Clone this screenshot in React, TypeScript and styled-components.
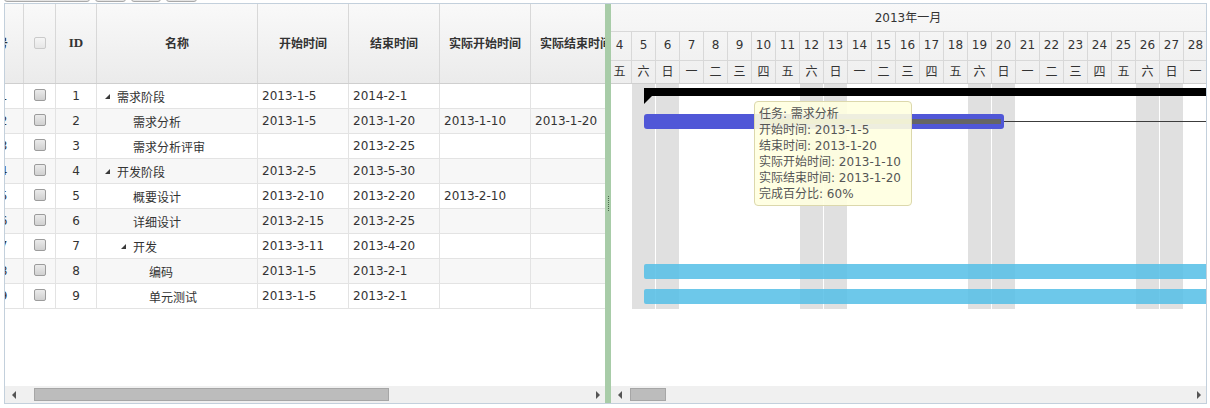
import React from 'react';
import styled, { createGlobalStyle } from 'styled-components';

const GlobalStyle = createGlobalStyle`
  html, body { margin: 0; padding: 0; background: #fff; }
  body {
    font-family: "DejaVu Sans", "Noto Sans CJK SC", sans-serif;
    font-size: 12px;
    color: #333;
  }
`;

type Task = {
  id: number;
  name: string;
  level: number;
  parent?: boolean;
  start: string;
  end: string;
  aStart?: string;
  aEnd?: string;
  kind: 'summary' | 'task' | 'light' | 'none';
  link?: boolean;
};

const tasks: Task[] = [
  { id: 1, name: '需求阶段', level: 0, parent: true, start: '2013-1-5', end: '2014-2-1', kind: 'summary' },
  { id: 2, name: '需求分析', level: 1, start: '2013-1-5', end: '2013-1-20', aStart: '2013-1-10', aEnd: '2013-1-20', kind: 'task', link: true },
  { id: 3, name: '需求分析评审', level: 1, start: '', end: '2013-2-25', kind: 'none' },
  { id: 4, name: '开发阶段', level: 0, parent: true, start: '2013-2-5', end: '2013-5-30', kind: 'summary' },
  { id: 5, name: '概要设计', level: 1, start: '2013-2-10', end: '2013-2-20', aStart: '2013-2-10', kind: 'task' },
  { id: 6, name: '详细设计', level: 1, start: '2013-2-15', end: '2013-2-25', kind: 'task' },
  { id: 7, name: '开发', level: 1, parent: true, start: '2013-3-11', end: '2013-4-20', kind: 'summary' },
  { id: 8, name: '编码', level: 2, start: '2013-1-5', end: '2013-2-1', kind: 'light' },
  { id: 9, name: '单元测试', level: 2, start: '2013-1-5', end: '2013-2-1', kind: 'light' },
];

const DAY_W = 24;
const FIRST_DAY = 4;
const BASE = Date.UTC(2013, 0, FIRST_DAY);
const dayIndex = (s: string) => {
  const [y, m, d] = s.split('-').map(Number);
  return Math.round((Date.UTC(y, m - 1, d) - BASE) / 86400000);
};
const xOf = (s: string) => dayIndex(s) * DAY_W + DAY_W / 2;

const days = Array.from({ length: 31 - FIRST_DAY + 1 }, (_, i) => i + FIRST_DAY);
const weekNames = ['日', '一', '二', '三', '四', '五', '六'];
const weekdayOf = (d: number) => (1 + d) % 7;

const Page = styled.div`
  width: 1210px;
  height: 408px;
  overflow: hidden;
  background: #fff;
`;

const Toolbar = styled.div`
  display: flex;
  align-items: flex-end;
  gap: 5px;
  height: 2px;
  margin-bottom: 1px;
  padding-left: 4px;
  overflow: hidden;
`;

const ToolButton = styled.div<{ $w: number }>`
  width: ${(p) => p.$w}px;
  height: 24px;
  flex: none;
  box-sizing: border-box;
  border: 1px solid #a9a9a9;
  border-radius: 3px;
  background: linear-gradient(#fdfdfd, #e4e4e4);
`;

const Panel = styled.div`
  margin-left: 4px;
  width: 1203px;
  height: 401px;
  box-sizing: border-box;
  border: 1px solid #c3d0dc;
  display: flex;
  background: #fff;
`;

const LeftPane = styled.div`
  width: 600px;
  flex: none;
  display: flex;
  flex-direction: column;
  overflow: hidden;
`;

const GridViewport = styled.div`
  flex: 1;
  overflow: hidden;
  display: flex;
  flex-direction: column;
`;

const GridInner = styled.div`
  width: 638px;
  margin-left: -21px;
  flex: 1;
  display: flex;
  flex-direction: column;
`;

const HeaderRow = styled.div`
  display: flex;
  height: 80px;
  flex: none;
  box-sizing: border-box;
  border-bottom: 1px solid #cfcfcf;
  background: linear-gradient(#f9f9f9, #ebebeb);
`;

const HeadCell = styled.div<{ $w: number; $right?: boolean }>`
  width: ${(p) => p.$w}px;
  flex: none;
  box-sizing: border-box;
  border-right: 1px solid #d8d8d8;
  display: flex;
  align-items: center;
  justify-content: ${(p) => (p.$right ? 'flex-end' : 'center')};
  padding-right: ${(p) => (p.$right ? 15 : 0)}px;
  padding-bottom: 2px;
  font-weight: bold;
  font-size: 12px;
  color: #333;
  white-space: nowrap;
  overflow: hidden;
`;

const HeadLatin = styled.span`
  font-family: "Liberation Serif", serif;
  font-size: 13px;
  font-weight: bold;
`;

const Row = styled.div<{ $alt: boolean }>`
  display: flex;
  height: 25px;
  flex: none;
  box-sizing: border-box;
  border-bottom: 1px solid #e3e3e3;
  background: ${(p) => (p.$alt ? '#f7f7f7' : '#fff')};
`;

const Cell = styled.div<{ $w: number; $center?: boolean }>`
  width: ${(p) => p.$w}px;
  flex: none;
  box-sizing: border-box;
  border-right: 1px solid #e3e3e3;
  display: flex;
  align-items: center;
  justify-content: ${(p) => (p.$center ? 'center' : 'flex-start')};
  padding-left: ${(p) => (p.$center ? 0 : 4)}px;
  white-space: nowrap;
  overflow: hidden;
  color: #333;
`;

const Check = styled.span<{ $disabled?: boolean }>`
  width: 12px;
  height: 12px;
  box-sizing: border-box;
  margin-bottom: ${(p) => (p.$disabled ? 0 : 2)}px;
  border: 1px solid ${(p) => (p.$disabled ? '#cacaca' : '#9c9c9c')};
  border-radius: 2px;
  background: ${(p) =>
    p.$disabled ? 'linear-gradient(#f5f5f5, #e6e6e6)' : 'linear-gradient(#ebebeb, #d0d0d0)'};
`;

const Indent = styled.span<{ $level: number }>`
  width: ${(p) => p.$level * 16}px;
  flex: none;
`;

const Expander = styled.span`
  width: 16px;
  flex: none;
  display: flex;
  align-items: center;
`;

const Triangle = styled.span`
  width: 0;
  height: 0;
  margin-left: 4px;
  margin-top: 1px;
  border-left: 5px solid transparent;
  border-bottom: 5px solid #3a3a3a;
`;

const Splitter = styled.div`
  width: 6px;
  flex: none;
  background: #a8cca8;
  display: flex;
  align-items: center;
  justify-content: center;
`;

const Grip = styled.div`
  width: 0;
  height: 15px;
  border-left: 1px dotted #4d6b4d;
`;

const GanttPane = styled.div`
  flex: 1;
  min-width: 0;
  display: flex;
  flex-direction: column;
  overflow: hidden;
`;

const GanttHeader = styled.div`
  height: 80px;
  flex: none;
  overflow: hidden;
  background: linear-gradient(#f8f8f8, #eeeeee);
`;

const Timeline = styled.div`
  width: ${days.length * DAY_W}px;
  margin-left: -3px;
  position: relative;
`;

const YearRow = styled.div`
  width: ${31 * DAY_W}px;
  margin-left: ${-(FIRST_DAY - 1) * DAY_W}px;
  height: 28px;
  box-sizing: border-box;
  border-bottom: 1px solid #d8d8d8;
  display: flex;
  align-items: center;
  justify-content: center;
  padding-bottom: 3px;
  color: #333;
`;

const DayRow = styled.div<{ $h: number; $last?: boolean }>`
  height: ${(p) => p.$h}px;
  box-sizing: border-box;
  border-bottom: 1px solid ${(p) => (p.$last ? '#cfcfcf' : '#d8d8d8')};
  display: flex;
`;

const DayCell = styled.div<{ $pb: number }>`
  width: ${DAY_W}px;
  flex: none;
  box-sizing: border-box;
  border-right: 1px solid #d8d8d8;
  display: flex;
  align-items: center;
  justify-content: center;
  padding-bottom: ${(p) => p.$pb}px;
  color: #333;
  white-space: nowrap;
`;

const GanttBody = styled.div`
  flex: 1;
  position: relative;
  overflow: hidden;
`;

const DayStrip = styled.div`
  display: flex;
  height: ${9 * 25}px;
`;

const DayColumn = styled.div<{ $weekend: boolean }>`
  width: ${DAY_W}px;
  flex: none;
  box-sizing: border-box;
  border-right: 1px solid #fff;
  background: ${(p) => (p.$weekend ? '#e0e0e0' : 'transparent')};
`;

const RowLayer = styled.div`
  position: absolute;
  top: 0;
  left: 0;
  width: 100%;
`;

const GanttRow = styled.div`
  position: relative;
  height: 25px;
`;

const SummaryBar = styled.div`
  position: absolute;
  top: 4px;
  height: 8px;
  background: #000;
`;

const SummaryCap = styled.div`
  position: absolute;
  top: 8px;
  left: 0;
  width: 0;
  height: 0;
  border-top: 8px solid #000;
  border-right: 8px solid transparent;
`;

const TaskBar = styled.div`
  position: absolute;
  top: 5px;
  height: 15px;
  border-radius: 3px;
  background: #5057d7;
`;

const ActualLine = styled.div`
  position: absolute;
  top: 10px;
  height: 5px;
  background: #656565;
`;

const LightBar = styled.div`
  position: absolute;
  top: 5px;
  height: 15px;
  border-radius: 2px;
  background: rgba(84, 190, 230, 0.85);
`;

const LinkLine = styled.div`
  position: absolute;
  top: 12px;
  height: 1px;
  width: 1200px;
  background: #3c3c3c;
`;

const Tooltip = styled.div`
  position: absolute;
  left: 143px;
  top: 17px;
  z-index: 5;
  padding: 4px 10px 3px 4px;
  border: 1px solid #dcd8ac;
  border-radius: 4px;
  background: rgba(255, 255, 224, 0.9);
  color: #555;
  font-size: 12px;
  line-height: 16px;
  white-space: nowrap;
`;

const ScrollTrack = styled.div`
  height: 17px;
  flex: none;
  display: flex;
  align-items: center;
  background: #f0f0f0;
`;

const ArrowBox = styled.div<{ $w: number }>`
  width: ${(p) => p.$w}px;
  height: 17px;
  flex: none;
  display: flex;
  align-items: center;
  justify-content: center;
`;

const Arrow = styled.span<{ $dir: 'left' | 'right' }>`
  width: 0;
  height: 0;
  border-top: 4px solid transparent;
  border-bottom: 4px solid transparent;
  ${(p) => (p.$dir === 'left' ? 'border-right: 4px solid #555;' : 'border-left: 4px solid #555;')}
`;

const Thumb = styled.div<{ $offset: number; $w: number }>`
  margin-left: ${(p) => p.$offset}px;
  width: ${(p) => p.$w}px;
  height: 13px;
  flex: none;
  box-sizing: border-box;
  background: #bcbcbc;
  border: 1px solid #a6a6a6;
`;

const Spacer = styled.div`
  flex: 1;
`;

const cols = [40, 32, 41, 161, 91, 91, 91, 91];

function ScrollBar(props: { leftW: number; offset: number; thumbW: number; rightW: number }) {
  return (
    <ScrollTrack>
      <ArrowBox $w={props.leftW}>
        <Arrow $dir="left" />
      </ArrowBox>
      <Thumb $offset={props.offset} $w={props.thumbW} />
      <Spacer />
      <ArrowBox $w={props.rightW}>
        <Arrow $dir="right" />
      </ArrowBox>
    </ScrollTrack>
  );
}

function GanttBar({ t }: { t: Task }) {
  if (t.kind === 'none' || !t.start) return null;
  const x1 = xOf(t.start);
  const x2 = xOf(t.end);
  if (t.kind === 'summary') {
    return (
      <SummaryBar style={{ left: x1, width: x2 - x1 }}>
        <SummaryCap />
      </SummaryBar>
    );
  }
  if (t.kind === 'light') {
    return <LightBar style={{ left: x1, width: x2 - x1 }} />;
  }
  return (
    <>
      <TaskBar style={{ left: x1, width: x2 - x1 }} />
      {t.aStart && t.aEnd && (
        <ActualLine style={{ left: xOf(t.aStart), width: xOf(t.aEnd) - xOf(t.aStart) - 3 }} />
      )}
      {t.link && <LinkLine style={{ left: x2 }} />}
    </>
  );
}

export default function App() {
  return (
    <Page>
      <GlobalStyle />
      <Toolbar>
        <ToolButton $w={86} />
        <ToolButton $w={31} />
        <ToolButton $w={30} />
        <ToolButton $w={31} />
      </Toolbar>
      <Panel>
        <LeftPane>
          <GridViewport>
            <GridInner>
              <HeaderRow>
                <HeadCell $w={cols[0]} $right>序号</HeadCell>
                <HeadCell $w={cols[1]}>
                  <Check $disabled />
                </HeadCell>
                <HeadCell $w={cols[2]}>
                  <HeadLatin>ID</HeadLatin>
                </HeadCell>
                <HeadCell $w={cols[3]}>名称</HeadCell>
                <HeadCell $w={cols[4]}>开始时间</HeadCell>
                <HeadCell $w={cols[5]}>结束时间</HeadCell>
                <HeadCell $w={cols[6]}>实际开始时间</HeadCell>
                <HeadCell $w={cols[7]}>实际结束时间</HeadCell>
              </HeaderRow>
              {tasks.map((t, i) => (
                <Row key={t.id} $alt={i % 2 === 1}>
                  <Cell $w={cols[0]} $center>{t.id}</Cell>
                  <Cell $w={cols[1]} $center>
                    <Check />
                  </Cell>
                  <Cell $w={cols[2]} $center>{t.id}</Cell>
                  <Cell $w={cols[3]}>
                    <Indent $level={t.level} />
                    <Expander>{t.parent && <Triangle />}</Expander>
                    {t.name}
                  </Cell>
                  <Cell $w={cols[4]}>{t.start}</Cell>
                  <Cell $w={cols[5]}>{t.end}</Cell>
                  <Cell $w={cols[6]}>{t.aStart || ''}</Cell>
                  <Cell $w={cols[7]}>{t.aEnd || ''}</Cell>
                </Row>
              ))}
            </GridInner>
          </GridViewport>
          <ScrollBar leftW={17} offset={12} thumbW={355} rightW={14} />
        </LeftPane>
        <Splitter>
          <Grip />
        </Splitter>
        <GanttPane>
          <GanttHeader>
            <Timeline>
              <YearRow>2013年一月</YearRow>
              <DayRow $h={29}>
                {days.map((d) => (
                  <DayCell key={d} $pb={2}>
                    {d}
                  </DayCell>
                ))}
              </DayRow>
              <DayRow $h={23} $last>
                {days.map((d) => (
                  <DayCell key={d} $pb={3}>
                    {weekNames[weekdayOf(d)]}
                  </DayCell>
                ))}
              </DayRow>
            </Timeline>
          </GanttHeader>
          <GanttBody>
            <Timeline>
              <DayStrip>
                {days.map((d) => {
                  const w = weekdayOf(d);
                  return <DayColumn key={d} $weekend={w === 0 || w === 6} />;
                })}
              </DayStrip>
              <RowLayer>
                {tasks.map((t) => (
                  <GanttRow key={t.id}>
                    <GanttBar t={t} />
                  </GanttRow>
                ))}
              </RowLayer>
            </Timeline>
            <Tooltip>
              <div>任务: 需求分析</div>
              <div>开始时间: 2013-1-5</div>
              <div>结束时间: 2013-1-20</div>
              <div>实际开始时间: 2013-1-10</div>
              <div>实际结束时间: 2013-1-20</div>
              <div>完成百分比: 60%</div>
            </Tooltip>
          </GanttBody>
          <ScrollBar leftW={17} offset={2} thumbW={36} rightW={15} />
        </GanttPane>
      </Panel>
    </Page>
  );
}
